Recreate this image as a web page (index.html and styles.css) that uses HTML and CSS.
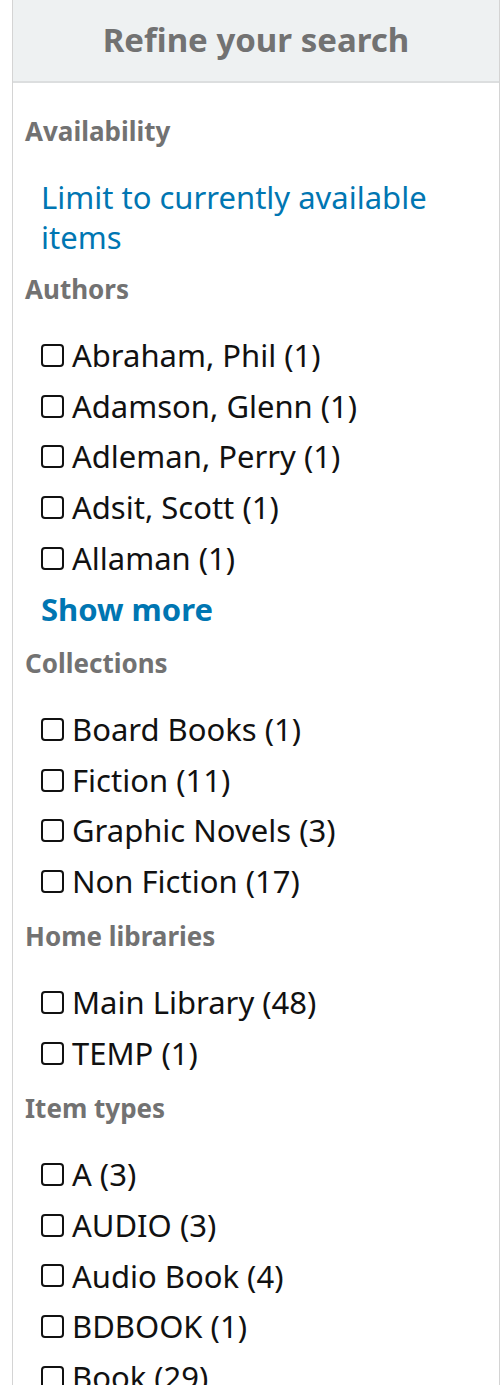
FILE: index.html
```html
<!DOCTYPE html>
<html>
<head>
<meta charset="utf-8">
<link rel="stylesheet" href="styles.css">
</head>
<body>
<div class="panel">
  <h2 class="title">Refine your search</h2>
  <div class="facets">
    <section class="facet">
      <h3 class="facet-h">Availability</h3>
      <a class="link" href="#">Limit to currently available items</a>
    </section>
    <section class="facet">
      <h3 class="facet-h">Authors</h3>
      <ul class="items">
        <li><span class="cb"></span>Abraham, Phil (1)</li>
        <li><span class="cb"></span>Adamson, Glenn (1)</li>
        <li><span class="cb"></span>Adleman, Perry (1)</li>
        <li><span class="cb"></span>Adsit, Scott (1)</li>
        <li><span class="cb"></span>Allaman (1)</li>
      </ul>
      <a class="more" href="#">Show more</a>
    </section>
    <section class="facet">
      <h3 class="facet-h">Collections</h3>
      <ul class="items">
        <li><span class="cb"></span>Board Books (1)</li>
        <li><span class="cb"></span>Fiction (11)</li>
        <li><span class="cb"></span>Graphic Novels (3)</li>
        <li><span class="cb"></span>Non Fiction (17)</li>
      </ul>
    </section>
    <section class="facet">
      <h3 class="facet-h">Home libraries</h3>
      <ul class="items">
        <li><span class="cb"></span>Main Library (48)</li>
        <li><span class="cb"></span>TEMP (1)</li>
      </ul>
    </section>
    <section class="facet">
      <h3 class="facet-h">Item types</h3>
      <ul class="items">
        <li><span class="cb"></span>A (3)</li>
        <li><span class="cb"></span>AUDIO (3)</li>
        <li><span class="cb"></span>Audio Book (4)</li>
        <li><span class="cb"></span>BDBOOK (1)</li>
        <li><span class="cb"></span>Book (29)</li>
      </ul>
    </section>
  </div>
</div>
</body>
</html>
```
FILE: styles.css
```css
html, body {
  margin: 0;
  padding: 0;
  background: #fff;
}
body {
  font-family: "Noto Sans", "Open Sans", sans-serif;
  overflow: hidden;
  height: 1385px;
}
.panel {
  margin-left: 12px;
  border-left: 1px solid #d4d4d4;
  border-right: 1px solid #d4d4d4;
  min-height: 1385px;
}
.title {
  margin: 0;
  height: 83px;
  box-sizing: border-box;
  background: #eef1f2;
  border-bottom: 2px solid #dcdedf;
  color: #727272;
  font-size: 33px;
  font-weight: 700;
  text-align: center;
  line-height: 80px;
}
.facets {
  padding: 0 12px;
}
.facet-h {
  margin: 13.5px 0 0;
  color: #727272;
  font-size: 26px;
  font-weight: 700;
  line-height: 32px;
}
.facets .facet:first-child .facet-h {
  margin-top: 32px;
}
.link {
  display: block;
  margin: 30px 0 0 16px;
  color: #0076b2;
  text-decoration: none;
  font-size: 31px;
  line-height: 40px;
}
.facet:first-child + .facet .facet-h {
  margin-top: 16px;
}
.items {
  list-style: none;
  margin: 25px 0 0 16px;
  padding: 0;
}
.items li {
  display: flex;
  align-items: center;
  font-size: 31px;
  line-height: 50.7px;
  color: #111;
  white-space: nowrap;
}
.cb {
  width: 19px;
  height: 19px;
  border: 2px solid #111;
  border-radius: 4px;
  margin-right: 8px;
  flex: none;
}
.more {
  display: block;
  margin: 0 0 0 16px;
  color: #0076b2;
  text-decoration: none;
  font-weight: 700;
  font-size: 31px;
  line-height: 50px;
}
```
